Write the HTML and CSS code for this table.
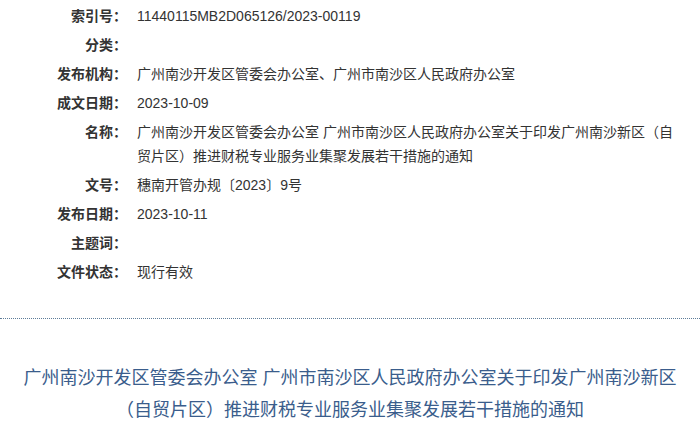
FILE: index.html
```html
<!DOCTYPE html>
<html lang="zh-CN">
<head>
<meta charset="utf-8">
<title>广州南沙开发区管委会办公室通知</title>
<link rel="stylesheet" href="styles.css">
</head>
<body>
<div class="page">
  <dl class="meta">
    <div class="row"><dt>索引号：</dt><dd>11440115MB2D065126/2023-00119</dd></div>
    <div class="row"><dt>分类：</dt><dd></dd></div>
    <div class="row"><dt>发布机构：</dt><dd>广州南沙开发区管委会办公室、广州市南沙区人民政府办公室</dd></div>
    <div class="row"><dt>成文日期：</dt><dd>2023-10-09</dd></div>
    <div class="row"><dt>名称：</dt><dd>广州南沙开发区管委会办公室 广州市南沙区人民政府办公室关于印发广州南沙新区（自贸片区）推进财税专业服务业集聚发展若干措施的通知</dd></div>
    <div class="row"><dt>文号：</dt><dd>穗南开管办规〔2023〕9号</dd></div>
    <div class="row"><dt>发布日期：</dt><dd>2023-10-11</dd></div>
    <div class="row"><dt>主题词：</dt><dd></dd></div>
    <div class="row"><dt>文件状态：</dt><dd>现行有效</dd></div>
  </dl>
  <hr class="divider">
  <h1 class="title">广州南沙开发区管委会办公室 广州市南沙区人民政府办公室关于印发广州南沙新区（自贸片区）推进财税专业服务业集聚发展若干措施的通知</h1>
</div>
</body>
</html>
```

FILE: styles.css
```css
html, body {
  margin: 0;
  padding: 0;
  background: #ffffff;
}

body {
  font-family: "Liberation Sans", "Noto Sans CJK SC", sans-serif;
  color: #333333;
}

.page {
  width: 700px;
}

.meta {
  margin: 0;
  padding: 2px 20px 0 0;
  font-size: 14px;
  line-height: 24px;
}

.row {
  display: grid;
  grid-template-columns: 127px 1fr;
  column-gap: 10px;
  padding: 2px 0 3px;
}

.row dt {
  margin: 0;
  text-align: right;
  font-weight: bold;
  color: #333333;
}

.row dd {
  margin: 0;
  min-height: 24px;
  color: #333333;
}

.divider {
  margin: 31px 0 0;
  border: 0;
  border-top: 1px dotted #5d7c98;
  height: 0;
}

.title {
  margin: 43px 0 0;
  padding: 0 20px;
  font-size: 18px;
  line-height: 32px;
  font-weight: normal;
  text-align: center;
  color: #3a5d8c;
}
```
